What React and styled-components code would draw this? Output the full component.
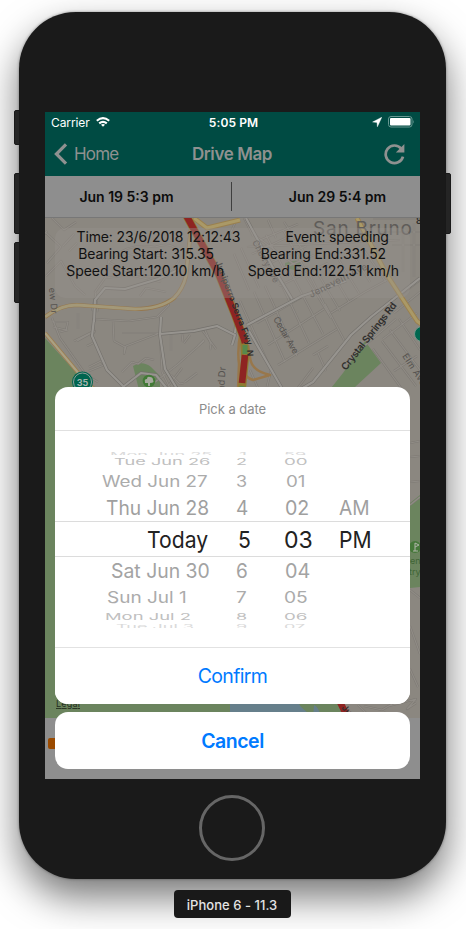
import React from "react";
import styled, { createGlobalStyle } from "styled-components";

const Global = createGlobalStyle`
  * { box-sizing: border-box; }
  html, body { margin: 0; background: #fff; overflow: hidden; }
  body { font-family: Inter, "Liberation Sans", sans-serif; }
`;

const Page = styled.main`
  width: 466px;
  height: 929px;
  padding-top: 12px;
  display: flex;
  flex-direction: column;
  align-items: center;
  overflow: hidden;
`;

const Phone = styled.div`
  position: relative;
  width: 427px;
  height: 867px;
  margin-right: 1px;
  padding: 100px 26px 0;
  border-radius: 57px;
  background: #1a1a1a;
  box-shadow: 0 18px 38px rgba(0, 0, 0, 0.54), 0 0 3px rgba(0, 0, 0, 0.4);
  flex-shrink: 0;
`;

const SideKey = styled.span`
  position: absolute;
  ${(p) => (p.$side === "left" ? "left: -5px" : "right: -5px")};
  top: ${(p) => p.$top}px;
  width: 6px;
  height: ${(p) => p.$h}px;
  border-radius: ${(p) => (p.$side === "left" ? "2px 0 0 2px" : "0 2px 2px 0")};
  background: #252525;
  border: 1px solid #191919;
`;

const HomeKey = styled.div`
  width: 66px;
  height: 66px;
  margin: 16px 0 0 154px;
  border: 3px solid #666;
  border-radius: 50%;
`;

const Caption = styled.div`
  position: relative;
  width: 117px;
  height: 28px;
  margin: 11px 2px 0 0;
  border-radius: 4px;
  background: #191919;
  color: #e4e4e4;
  font-size: 13px;
  font-weight: 500;
  letter-spacing: 0.05px;
  line-height: 31px;
  text-align: center;
  flex-shrink: 0;
`;

const Screen = styled.div`
  position: relative;
  width: 375px;
  height: 667px;
  background: #8e8e8e;
  overflow: hidden;
`;

const StatusBar = styled.div`
  height: 20px;
  padding: 0 6px;
  background: #004b43;
  color: #fff;
  display: grid;
  grid-template-columns: 1fr auto 1fr;
  align-items: center;
  font-size: 12px;
`;

const StatusGroup = styled.div`
  display: flex;
  align-items: center;
  gap: ${(p) => p.$gap}px;
  justify-content: ${(p) => (p.$end ? "flex-end" : "flex-start")};
  letter-spacing: -0.1px;
`;

const Clock = styled.span`
  font-weight: 600;
  letter-spacing: 0.1px;
  margin-left: 2px;
`;

const NavBar = styled.header`
  height: 44px;
  padding: 0 15px 0 9px;
  background: #004b43;
  color: #8f9190;
  display: grid;
  grid-template-columns: 1fr auto 1fr;
  align-items: center;
  font-size: 17px;
  svg { display: block; }
`;

const NavSide = styled.div`
  display: flex;
  align-items: center;
  gap: 6px;
  justify-content: ${(p) => (p.$end ? "flex-end" : "flex-start")};
  letter-spacing: -0.85px;
`;

const NavTitle = styled.h1`
  margin: 0 0 0 5px;
  font-size: 17px;
  font-weight: 600;
  letter-spacing: -0.4px;
`;

const RangeBar = styled.div`
  height: 42px;
  border-bottom: 1px solid #777;
  background: #8e8e8e;
  color: #0c0c0c;
  display: grid;
  grid-template-columns: 186px 1px 188px;
  align-items: center;
  font-size: 14px;
  font-weight: 600;
`;

const RangeDate = styled.span`
  text-align: center;
  padding-left: ${(p) => p.$left || 0}px;
  padding-right: ${(p) => p.$right || 0}px;
`;

const RangeLine = styled.span`
  height: 29px;
  background: #3f3f3f;
`;

const MapArea = styled.section`
  position: relative;
  height: 500px;
  background: #8b8780;
  svg { display: block; }
`;

const InfoCard = styled.div`
  position: absolute;
  left: 10px;
  top: 10px;
  width: 355px;
  height: 70px;
  border-radius: 10px;
  background: rgba(149, 146, 140, 0.4);
  color: #111;
  font-size: 14px;
  line-height: 17px;
`;

const InfoRow = styled.div`
  display: flex;
  justify-content: space-around;
`;

const InfoText = styled.span`
  width: ${(p) => p.$w}px;
  letter-spacing: ${(p) => p.$ls}px;
  white-space: nowrap;
`;

const FootBar = styled.footer`
  height: 61px;
  padding: 20px 0 0 3px;
`;

const Marker = styled.div`
  width: 16px;
  height: 11px;
  border-radius: 2px;
  background: #9a4a00;
`;

const ActionSheet = styled.div`
  position: absolute;
  left: 10px;
  right: 10px;
  bottom: 10px;
  display: flex;
  flex-direction: column;
  gap: 8px;
`;

const Panel = styled.div`
  background: #fff;
  border-radius: 13px;
  overflow: hidden;
`;

const SheetTitle = styled.div`
  height: 44px;
  border-bottom: 1px solid #e0e0e0;
  line-height: 44px;
  text-align: center;
  color: #8c8c8c;
  font-size: 13px;
  letter-spacing: -0.05px;
`;

const Wheel = styled.div`
  height: 217px;
  padding-top: 19px;
  border-bottom: 1px solid #e2e2e2;
`;

const WheelRow = styled.div`
  height: ${(p) => p.$h}px;
  line-height: ${(p) => (p.$selected ? p.$h - 1 : p.$h)}px;
  display: grid;
  grid-template-columns: 166px 49px 69px 71px;
  overflow: hidden;
  color: ${(p) => p.$color};
  font-size: ${(p) => p.$size}px;
  border: solid #dcdcdc;
  border-width: ${(p) => (p.$selected ? "1px 0" : "0")};
`;

const WheelCell = styled.span`
  padding-left: ${(p) => p.$x}px;
  padding-top: ${(p) => p.$dy || 0}px;
  white-space: nowrap;
`;

const WheelGlyphs = styled.span`
  display: block;
  width: max-content;
  transform: scale(${(p) => p.$sx}, ${(p) => p.$sy});
  transform-origin: left center;
`;

const SheetButton = styled.button`
  display: block;
  width: 100%;
  height: ${(p) => p.$h}px;
  padding: 0;
  border: 0;
  background: #fff;
  color: #007aff;
  font-family: inherit;
  font-size: 19.5px;
  font-weight: ${(p) => (p.$bold ? 600 : 400)};
  letter-spacing: ${(p) => (p.$bold ? -0.5 : -0.65)}px;
`;

// Each cell: [text, left inset in its column, horizontal stretch]
const rows = [
  { h: 5, sy: 0.32, size: 20, color: "#dadada", dy: 2, cells: [["Mon Jun 25", 55, 0.91], ["1", 18, 1], ["59", 14, 0.9]] },
  { h: 14, sy: 0.46, size: 20, color: "#c0c0c0", cells: [["Tue Jun 26", 59, 0.91], ["2", 15, 0.9], ["00", 14, 0.94]] },
  { h: 24, sy: 0.76, size: 20, color: "#ababab", dy: 1, cells: [["Wed Jun 27", 47, 0.94], ["3", 15, 0.9], ["01", 16, 0.94]] },
  { h: 28, sy: 1, size: 20, color: "#9f9f9f", dy: 1, cells: [["Thu Jun 28", 51, 0.96], ["4", 15, 0.95], ["02", 15, 0.98], ["AM", 0, 0.96]] },
  { h: 36, sy: 1, size: 23.5, color: "#222", selected: true, cells: [["Today", 92, 0.9], ["5", 17, 0.9], ["03", 14, 0.98], ["PM", 0, 0.9]] },
  { h: 28, sy: 1, size: 20, color: "#a3a3a3", cells: [["Sat Jun 30", 56, 0.97], ["6", 15, 0.95], ["04", 15, 0.99]] },
  { h: 25, sy: 0.76, size: 20, color: "#ababab", dy: 1, cells: [["Sun Jul 1", 52, 0.95], ["7", 15, 0.95], ["05", 14, 0.96]] },
  { h: 14, sy: 0.46, size: 20, color: "#c0c0c0", cells: [["Mon Jul 2", 50, 0.92], ["8", 15, 0.9], ["06", 14, 0.94]] },
  { h: 4, sy: 0.32, size: 20, color: "#dadada", dy: 1, cells: [["Tue Jul 3", 61, 0.9], ["9", 15, 0.9], ["07", 14, 0.9]] },
];

const minorRoads = [
  "M45 232l16 15-14 16m0-32-5 6m21 9 11-12m-28 42 15-15 14 25 10 9m-16-44 8-8M52 218l12 12 12-8",
  "M98 312l-3-20 10-14 25-3 31 7M105 278l4-18 26-6 30 2M96 293l-4 18",
  "M109 262q16-20 46-15 24-8 24 14-12 18-34 15-20-4-36-14M140 296l6-8 20 4",
  "M52 318l8 20 26 37 12 7M52 322h16l-2 8-13-3M68 330l-8 2m18-19v16m-1 12 18-10-3 4M74 341l18-9",
  "M94 319l35 2 28-4 12-12-3-4M113 321l1 20 11 6-1 7 2-8 34-13M160 333h-38",
  "M89 371l15-6-3-4-12 6m4-24-6 3m35 26 10-10 6 2 8-6 8 2",
  "M160 335l2 37 8 16m1-54v17m12-17-1 8m3 40 12-9m-26 2 9 9 4-1m-29-1 22-17 27-24M205 330l6 14-1 6m-6-10-6 6",
  "M165 390l17-22m20-38 14 19m-26-14-6 8",
  "M247 247l153-7M252 233l52 39M260 240l38-16m-46 30 42-20m-34 34 46-22m-41 30 49-21m-35 31 49-23",
  "M236 221l-6 13m14-16 9 18m15-16 8 18m8-16 20 30m-70 2 15 36m-8-42 18 40m-5-46 23 41m-11-48 22 42m-5-47 23 41",
  "M240 301l28 62m-14-71 31 70m-20-76 32 70m-18-77 30 64m-18-70 32 61m-17-67 23 47",
  "M306 277l25 41m-14-46 23 39m-12-45 21 36m-10-42 20 33m-7-40 18 29m-8-35 24 35",
  "M278 365l59-36M268 345l56-36m-67 14 52-30M331 313l34-21 22-12m-62 24 19 36M328 346l-15 9",
  "M373 349l31 43m-22-51 34 45m-26-56 30 40m-21-51 21 31m-37-11 34-26m-55 35 34-29m-2 52 23-15",
  "M402 294l18-14m-26 33 26-21m-17-63v43m11-49v54m-22-32h28m-42-13h42m-47-13h46",
  "M250 370l11 25m33-2 19-25m-42 2-6 25m61-24-8-18",
  "M410 443l10-2m-10 16 10-1m-10 26 10-1m-10 24 10-8m-10 93 10 8m-10 28 10 28m-10 15 8 18",
  "M358 705l12 12m-6-11 18 4 10-6m-8 8 7 7m-2-13 27-7-9 10 9-6",
];

const mainRoads = [
  "M94 322l1-22 10-12 20 1 33-10 20-9",
  "M94 319l-2 17 15 34 24 24",
  "M161 317l-1 18 5 34 14 23M160 334l34-3 23-5 18 9-3 10",
  "M226 278l11 37-2 18M247 325l55-29 44-15M249 331l38 66 13-4M294 393l19-11 38-47 20-18 49-39",
  "M246 218l26 48 20 33M119 390l22-17 15 2 13 16",
];

function MapDrawing() {
  return (
    <svg width="375" height="500" viewBox="45 218 375 500">
      <rect x="45" y="218" width="375" height="500" fill="#8b8780" />
      <path d="M45 338l52 58v322H45z" fill="#6b845e" />
      <path d="M133 366q9-6 18 1l9 9v18h-20z" fill="#6b845e" />
      <path d="M365 341l16 22-26 24-6 10h-25l19-24z" fill="#6b845e" />
      <path d="M285 263q10-4 17-1l-8 8-9-2zM410 503l10-8v92l-10 1z" fill="#6b845e" />
      <rect x="45" y="700" width="185" height="18" fill="#6b845e" />
      <rect x="230" y="700" width="85" height="18" fill="#667f8b" />
      <path d="M296 700h42l8 18h-25q-16-3-25-18z" fill="#6b845e" />
      <path d="M314 705q5 2 7 13h-8z" fill="#667f8b" />
      <g fill="none" strokeLinejoin="round">
        {minorRoads.map((d) => <path key={d} d={d} stroke="#7d7973" strokeWidth="2.2" />)}
        {minorRoads.map((d) => <path key={d} d={d} stroke="#908c86" strokeWidth="1.2" />)}
        {mainRoads.map((d) => <path key={d} d={d} stroke="#74716c" strokeWidth="3.4" />)}
        {mainRoads.map((d) => <path key={d} d={d} stroke="#97948f" strokeWidth="2.2" />)}
        <path d="M45 317q15-12 32-12l58 4q25 0 39-11 9-9 12-22l6-58" stroke="#95784f" strokeWidth="4.2" />
        <path d="M45 317q15-12 32-12l58 4q25 0 39-11 9-9 12-22l6-58" stroke="#a39878" strokeWidth="2.8" />
        <path d="M45 333l40 48 14 12" stroke="#9b7e51" strokeWidth="4" />
        <path d="M45 333l40 48 14 12" stroke="#aaa083" strokeWidth="2.2" />
        <path d="M194 218l13 10 33-8M357 218l30 57 30 46 4 3" stroke="#9a804f" strokeWidth="5" />
        <path d="M194 218l13 10 33-8M357 218l30 57 30 46 4 3" stroke="#aa9967" strokeWidth="3" />
        <path d="M241 330q-4 18-2 34l-1 25M248 345l2 12q1 14 20 18l-17 5q-7-2-9-8" stroke="#98774b" strokeWidth="2.5" />
        <path d="M186 215l33 60 16 40 9 24 1 20-4 39" stroke="#8f7b32" strokeWidth="8" />
        <path d="M186 215l33 60 16 40 9 24 1 4M245 355l-3 28M339 700l10 20" stroke="#8e2422" strokeWidth="6.6" />
        <path d="M245 345v9m-3 32-1 8" stroke="#57894d" strokeWidth="5" />
      </g>
      <g fill="#55524f" fontFamily="Inter, sans-serif" fontSize="9">
        <text x="313" y="235" fontSize="19" textLength="99" fill="#5f5c59">San Bruno</text>
        <text transform="translate(252 242) rotate(62)" textLength="47">Cherry Ave</text>
        <text transform="translate(311 298) rotate(-27)" fontSize="9.5" textLength="64">Jenevein Ave</text>
        <text transform="translate(273 319) rotate(60)" textLength="41">Cedar Ave</text>
        <text transform="translate(402 356) rotate(57)" textLength="36">Elm Ave</text>
        <text transform="translate(224 397) rotate(-87)" fontSize="9.5" textLength="30">2nd Dr</text>
        <text transform="translate(49 288) rotate(85)" textLength="26">ew Dr</text>
        <g fill="#302f2e" fontWeight="600">
          <text transform="translate(346 371) rotate(-52)" fontSize="10" textLength="83">Crystal Springs Rd</text>
          <text transform="translate(215 262) rotate(69)" fontSize="9" textLength="90">Juniperro Serra Fwy</text>
          <text transform="translate(247 350) rotate(88)" fontSize="8.5">N</text>
          <text transform="translate(341 708) rotate(48)" fontSize="9">Jun</text>
          <text x="416" y="224" fontSize="9">8</text>
        </g>
        <text x="410" y="564" fontSize="9" fill="#3f6535">en</text>
        <text x="409" y="575" fontSize="9" fill="#3f6535">try</text>
      </g>
      <circle cx="415" cy="547" r="6" fill="#46783a" />
      <path d="M413 551h5m-3 0v-8l4 2-4 2" stroke="#aeb3a7" strokeWidth="1" fill="none" />
      <circle cx="82.5" cy="382" r="10.5" fill="#00654f" />
      <circle cx="82.5" cy="382" r="9" fill="none" stroke="#919d98" strokeWidth="1" />
      <text x="82.5" y="386" textAnchor="middle" fontFamily="Inter, sans-serif" fontWeight="700" fontSize="9" fill="#a6b4ae">35</text>
      <circle cx="149" cy="381" r="6.3" fill="#427a36" />
      <path d="M145 382q-1-3 2-3 0-3 3-2 3 0 3 3 2 3-3 3v3h-2v-3h-3" fill="#a6aa9d" />
      <circle cx="422" cy="334" r="7.5" fill="#00674f" stroke="#78958a" />
      <text x="56" y="707" fontFamily="Inter, sans-serif" fontSize="9" textLength="24" textDecoration="underline" fill="#252f21">Legal</text>
    </svg>
  );
}

export default function App() {
  return (
    <>
      <Global />
      <Page>
        <Phone>
          <SideKey $side="left" $top={98} $h={35} />
          <SideKey $side="left" $top={161} $h={61} />
          <SideKey $side="left" $top={230} $h={61} />
          <SideKey $side="right" $top={161} $h={61} />
          <Screen>
            <StatusBar>
              <StatusGroup $gap={6}>
                Carrier
                <svg width="14" height="10" viewBox="0 0 14 10" fill="none" stroke="#fff" strokeWidth="2.1">
                  <path d="M.8 3.8q6.2-5.2 12.4 0M3.2 6.4q3.8-3.2 7.6 0" />
                  <path d="M5 7.8q2-1.4 4 0l-2 2z" fill="#fff" stroke="none" />
                </svg>
              </StatusGroup>
              <Clock>5:05 PM</Clock>
              <StatusGroup $end $gap={6}>
                <svg width="10" height="10" viewBox="0 0 10 10"><path d="M.6 5 9.8.2 5.4 9.8 5 5.4z" fill="#fff" stroke="#fff" strokeWidth=".4" /></svg>
                <svg width="26" height="12" viewBox="0 0 26 12">
                  <rect x=".5" y=".5" width="23.5" height="10.5" rx="2.5" fill="none" stroke="#669791" />
                  <rect x="2" y="2" width="20.5" height="7.5" rx="1" fill="#fff" />
                  <path d="M25 4q1.3 1.8 0 3.6z" fill="#669791" />
                </svg>
              </StatusGroup>
            </StatusBar>
            <NavBar>
              <NavSide>
                <svg width="14" height="22" viewBox="0 0 14 22" fill="none" stroke="#8f9190" strokeWidth="3.2"><path d="M12 1.3 2.4 11l9.6 9.7" /></svg>
                Home
              </NavSide>
              <NavTitle>Drive Map</NavTitle>
              <NavSide $end>
                <svg width="21" height="21" viewBox="0 0 21 21" fill="none" stroke="#8f9190" strokeWidth="2.7">
                  <path d="M17.2 4.6A8.8 8.8 0 1 0 19 12.6" />
                  <path d="M20.4 0v8.6h-8.6z" fill="#8f9190" stroke="none" />
                </svg>
              </NavSide>
            </NavBar>
            <RangeBar>
              <RangeDate $right={23}>Jun 19 5:3 pm</RangeDate>
              <RangeLine />
              <RangeDate $left={23}>Jun 29 5:4 pm</RangeDate>
            </RangeBar>
            <MapArea>
              <MapDrawing />
              <InfoCard>
                <InfoRow>
                  <InfoText $w={166} $ls={-0.12}>Time: 23/6/2018 12:12:43</InfoText>
                  <InfoText $w={103} $ls={-0.2}>Event: speeding</InfoText>
                </InfoRow>
                <InfoRow>
                  <InfoText $w={136} $ls={-0.1}>Bearing Start: 315.35</InfoText>
                  <InfoText $w={126} $ls={-0.17}>Bearing End:331.52</InfoText>
                </InfoRow>
                <InfoRow>
                  <InfoText $w={159} $ls={-0.05}>Speed Start:120.10 km/h</InfoText>
                  <InfoText $w={151} $ls={-0.12}>Speed End:122.51 km/h</InfoText>
                </InfoRow>
              </InfoCard>
            </MapArea>
            <FootBar><Marker /></FootBar>
            <ActionSheet>
              <Panel>
                <SheetTitle>Pick a date</SheetTitle>
                <Wheel>
                  {rows.map((r) => (
                    <WheelRow key={r.cells[0][0]} $h={r.h} $size={r.size} $color={r.color} $selected={r.selected}>
                      {r.cells.map(([text, x, sx]) => (
                        <WheelCell key={text} $x={x} $dy={r.dy}>
                          <WheelGlyphs $sx={sx} $sy={r.sy}>{text}</WheelGlyphs>
                        </WheelCell>
                      ))}
                    </WheelRow>
                  ))}
                </Wheel>
                <SheetButton $h={56}>Confirm</SheetButton>
              </Panel>
              <Panel>
                <SheetButton $h={57} $bold>Cancel</SheetButton>
              </Panel>
            </ActionSheet>
          </Screen>
          <HomeKey />
        </Phone>
        <Caption>iPhone 6 - 11.3</Caption>
      </Page>
    </>
  );
}
